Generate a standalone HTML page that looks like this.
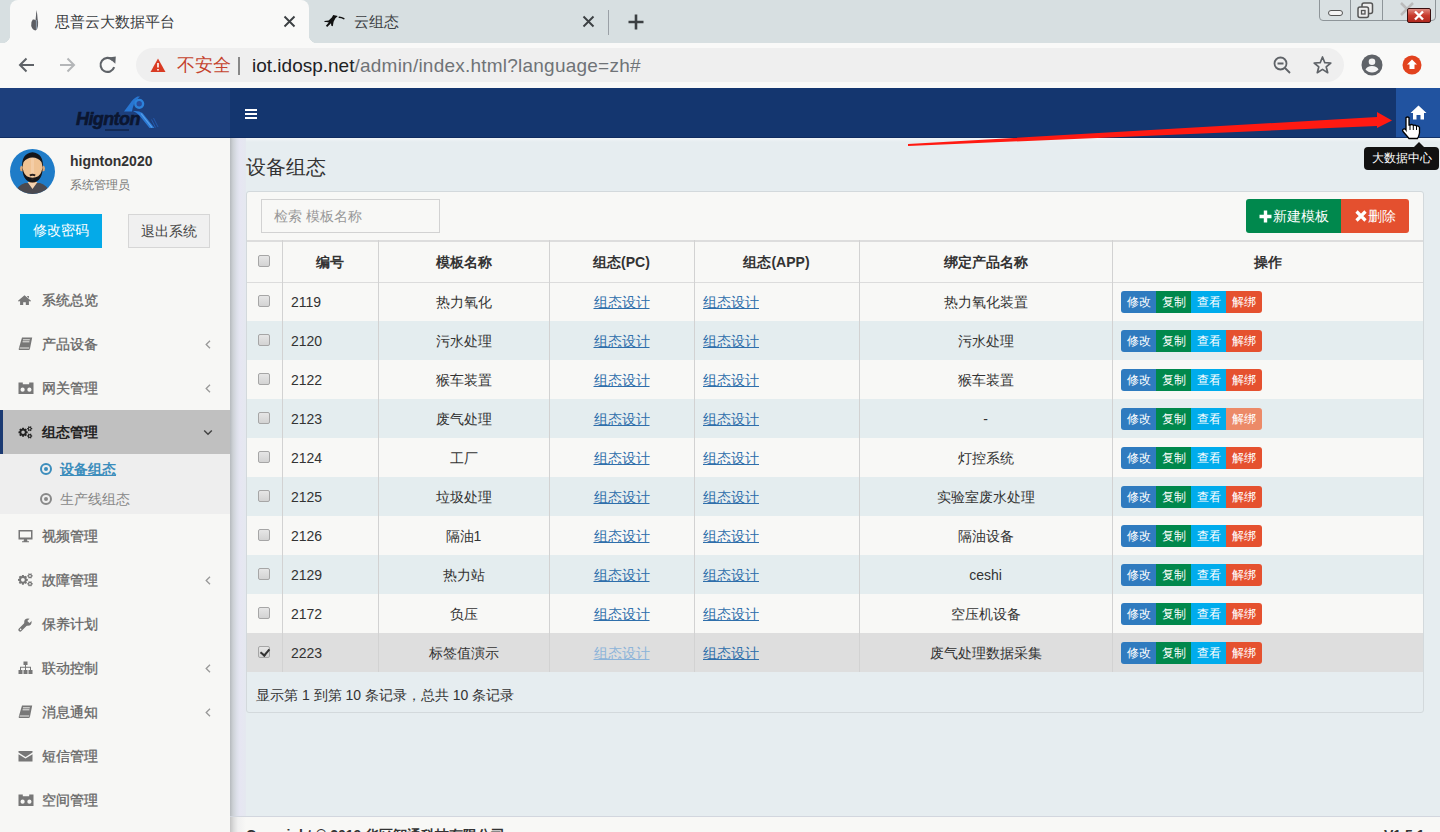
<!DOCTYPE html>
<html><head><meta charset="utf-8">
<style>
*{box-sizing:border-box;margin:0;padding:0}
html,body{width:1440px;height:832px;overflow:hidden;background:#e6edf0;font-family:"Liberation Sans",sans-serif;font-size:14px;color:#333}
.abs{position:absolute}
#tabstrip{left:0;top:0;width:1440px;height:43px;background:#d7dfe1}
#tab1{left:10px;top:0;width:299px;height:43px;background:#f9f9f8;border-radius:8px 8px 0 0}
#tab1:before,#tab1:after{content:"";position:absolute;bottom:0;width:8px;height:8px}
#tab1:before{left:-8px;background:radial-gradient(circle at 0 0,#d7dfe1 8px,#f9f9f8 8.5px)}
#tab1:after{right:-8px;background:radial-gradient(circle at 100% 0,#d7dfe1 8px,#f9f9f8 8.5px)}
#toolbar{left:0;top:43px;width:1440px;height:45px;background:#f9f9f8}
#omni{left:136px;top:48px;width:1208px;height:34px;background:#efefef;border-radius:17px}
.tabtitle{font-size:15px;line-height:18px;color:#3c4043;white-space:nowrap}
#logo{left:0;top:88px;width:230px;height:50px;background:#1d3f7c}
#navbar{left:230px;top:88px;width:1210px;height:50px;background:#14366f}
#homebtn{left:1396px;top:88px;width:44px;height:50px;background:#2153a0}
#sidebar{left:0;top:138px;width:230px;height:694px;background:#f7f7f5}
#shadow{left:230px;top:138px;width:16px;height:678px;background:linear-gradient(to right,#b6babe,#cdd1d6 3px,#dde0ea 7px,#e6e6f2 10px,#e5e8f0 15px)}
#shadow2{left:230px;top:817px;width:16px;height:15px;background:linear-gradient(to right,#c4c4c4,#dedede 4px,#f0f0f0 8px,#f8f8f6 16px)}
.menu{position:absolute;left:0;width:230px;height:44px;color:#666;font-size:14px}
.menu .tx{-webkit-text-stroke:0.3px currentColor}
.menu .ic{position:absolute;left:18px;top:15px;width:15px;height:14px;fill:#777}
.menu .tx{position:absolute;left:42px;top:13px;line-height:18px;white-space:nowrap}
.menu .chev{position:absolute;left:204px;top:18px;width:8px;height:9px}
.sub{position:absolute;left:0;width:230px;height:30px;font-size:14px;color:#888}
.sub .tx{position:absolute;left:60px;top:6px;line-height:18px;white-space:nowrap}
.sub .ci{position:absolute;left:40px;top:9px;width:12px;height:12px;border:2px solid #888;border-radius:50%}
.sub .ci:after{content:"";position:absolute;left:2px;top:2px;width:4px;height:4px;border-radius:50%;background:currentColor}
#panel{left:246px;top:191px;width:1178px;height:522px;background:#e6edf0;border:1px solid #d3d9dc;border-radius:3px}
#panelTop{left:247px;top:192px;width:1176px;height:48px;background:#f8f8f6;border-radius:3px 3px 0 0}
#search{left:261px;top:199px;width:179px;height:34px;border:1px solid #d2d2d2;background:#f8f8f6;color:#999;font-size:14px;line-height:32px;padding-left:12px}
.bigbtn{position:absolute;top:199px;height:34px;color:#fff;font-size:14px;line-height:34px;white-space:nowrap}
.row{position:absolute;left:247px;width:1176px;height:39px}
.row>div{position:absolute;top:1px;height:39px;line-height:39px;white-space:nowrap}
.hdr{position:absolute;left:247px;top:240px;width:1176px;height:43px;background:#f8f8f6;border-top:2px solid #ddd;border-bottom:1px solid #ddd}
.hdr>div{position:absolute;top:0;height:40px;line-height:40px;font-weight:bold;text-align:center;white-space:nowrap}
.vl{position:absolute;top:240px;width:1px;height:432px;background:#d2d2d2}
.cb{left:11px;width:12px;height:12px!important;top:13px!important;border:1px solid #a6a6a6;border-radius:2px;background:linear-gradient(#e6e6e6,#d3d3d3)}
.c-no{left:44px}
.c-name{left:131px;width:171px;text-align:center}
.c-pc{left:302px;width:145px;text-align:center}
.c-app{left:456px}
.c-prod{left:612px;width:253px;text-align:center}
.acts{left:874px;top:9px!important;height:22px!important;line-height:22px!important;font-size:12px}
.acts span{float:left;width:35px;height:22px;color:#fff;text-align:center}
.b1{background:#2f7bbf;border-radius:3px 0 0 3px}
.b2{background:#00884c}
.b3{background:#00acec}
.b4{background:#e5512f;border-radius:0 3px 3px 0;width:36px!important}
.b4.lt{background:#ec8a68}
.cb.chk{background:linear-gradient(#e6e6e6,#d3d3d3)}
.cb.chk:after{content:"";position:absolute;left:3px;top:0px;width:4px;height:7px;border:solid #333;border-width:0 2.5px 2.5px 0;transform:rotate(40deg)}
.cb{position:absolute}
a{color:#2f6fab;text-decoration:underline}
a.lt{color:#8db4d9}
#foot{left:230px;top:816px;width:1210px;height:16px;background:#f8f8f6;border-top:1px solid #d2d6de}
</style></head><body>
<div id="tabstrip" class="abs"></div>
<div id="tab1" class="abs"></div>
<div id="toolbar" class="abs"></div>
<div id="omni" class="abs"></div>
<div class="abs tabtitle" style="left:55px;top:13px">思普云大数据平台</div>
<div class="abs tabtitle" style="left:354px;top:13px">云组态</div>
<div class="abs" style="left:177px;top:54.5px;font-size:17.5px;line-height:20px;color:#c5432e;white-space:nowrap">不安全</div>
<div class="abs" style="left:238px;top:57px;width:2px;height:18px;background:#888"></div>
<div class="abs" style="left:252px;top:55px;font-size:19px;line-height:22px;color:#202124;white-space:nowrap">iot.idosp.net<span style="color:#6f7377;letter-spacing:0.23px">/admin/index.html?language=zh#</span></div>

<div id="logo" class="abs"></div>
<div id="navbar" class="abs"></div>
<div id="homebtn" class="abs"></div>
<div class="abs" style="left:0;top:137px;width:1440px;height:1px;background:#0f2b5c;opacity:0.8"></div>
<div class="abs" style="left:0;top:138px;width:1440px;height:4px;background:linear-gradient(rgba(255,255,255,0.5),rgba(255,255,255,0))"></div>

<div id="sidebar" class="abs"></div>
<div id="shadow" class="abs"></div>

<div class="abs" style="left:70px;top:152px;font-weight:bold;font-size:14px;line-height:18px;color:#333">hignton2020</div>
<div class="abs" style="left:70px;top:177px;font-size:12px;line-height:16px;color:#777">系统管理员</div>
<div class="abs" style="left:20px;top:214px;width:82px;height:34px;background:#04aae8;color:#fff;text-align:center;line-height:33px">修改密码</div>
<div class="abs" style="left:128px;top:214px;width:82px;height:34px;background:#f0f0f0;border:1px solid #d6d6d6;color:#444;text-align:center;line-height:32px">退出系统</div>

<div class="menu" style="top:278px"><svg class="ic" viewBox="0 0 15 12" style="width:13px;height:10.5px;top:16.5px" preserveAspectRatio="none"><path d="M7.5 0.3 L15 6.6 L13.9 7.8 L12.6 6.7 L12.6 11.7 L9 11.7 L9 8.2 L6 8.2 L6 11.7 L2.4 11.7 L2.4 6.7 L1.1 7.8 L0 6.6 Z M10.6 1 L12.6 1 L12.6 3.6 L10.6 2 Z"/></svg><div class="tx">系统总览</div></div>
<div class="menu" style="top:322px"><svg class="ic" viewBox="0 0 15 14"><path d="M4 0.5 L14.2 0.5 L12 11.5 Q11.7 13 10.5 13 L1.2 13 Q0.4 12.7 0.8 11.5 Z"/><path d="M1.6 11 L11.2 11 M5 2.8 L11.8 2.8 M4.6 4.8 L11.4 4.8" stroke="#f7f7f5" stroke-width="0.9"/></svg><div class="tx">产品设备</div><svg class="chev" viewBox="0 0 8 9"><path d="M6 0.8 L2.2 4.5 L6 8.2" stroke="#999" stroke-width="1.3" fill="none"/></svg></div>
<div class="menu" style="top:366px"><svg class="ic" viewBox="0 0 16 13" style="width:16px;height:13px;top:16px"><path fill-rule="evenodd" d="M0.5 0.5 L4.8 0.5 L4.8 2.3 L11.2 2.3 L11.2 0.5 L15.5 0.5 L15.5 12 L0.5 12 Z M4.6 5.6 A2.1 2.1 0 1 0 4.6 9.8 A2.1 2.1 0 1 0 4.6 5.6 Z M11.4 5.6 A2.1 2.1 0 1 0 11.4 9.8 A2.1 2.1 0 1 0 11.4 5.6 Z"/></svg><div class="tx">网关管理</div><svg class="chev" viewBox="0 0 8 9"><path d="M6 0.8 L2.2 4.5 L6 8.2" stroke="#999" stroke-width="1.3" fill="none"/></svg></div>
<div class="menu" style="top:410px;background:#c0c0c0;color:#222;font-weight:bold"><div style="position:absolute;left:0;top:0;width:3px;height:44px;background:#1b3a72"></div><svg class="ic" style="fill:#222" viewBox="0 0 15 15" style="height:15px;top:14px"><path fill-rule="evenodd" d="M8.63 6.67 L9.82 6.89 L9.82 8.71 L8.63 8.93 L8.34 9.64 L9.02 10.63 L7.73 11.92 L6.74 11.24 L6.03 11.53 L5.81 12.72 L3.99 12.72 L3.77 11.53 L3.06 11.24 L2.07 11.92 L0.78 10.63 L1.46 9.64 L1.17 8.93 L-0.02 8.71 L-0.02 6.89 L1.17 6.67 L1.46 5.96 L0.78 4.97 L2.07 3.68 L3.06 4.36 L3.77 4.07 L3.99 2.88 L5.81 2.88 L6.03 4.07 L6.74 4.36 L7.73 3.68 L9.02 4.97 L8.34 5.96 Z M6.80 7.80 A1.9 1.9 0 1 0 3.00 7.80 A1.9 1.9 0 1 0 6.80 7.80 Z M13.87 3.18 L14.73 3.28 L14.73 4.52 L13.87 4.62 L13.55 5.16 L13.90 5.96 L12.83 6.57 L12.31 5.88 L11.69 5.88 L11.17 6.57 L10.10 5.96 L10.45 5.16 L10.13 4.62 L9.27 4.52 L9.27 3.28 L10.13 3.18 L10.45 2.64 L10.10 1.84 L11.17 1.23 L11.69 1.92 L12.31 1.92 L12.83 1.23 L13.90 1.84 L13.55 2.64 Z M12.90 3.90 A0.9 0.9 0 1 0 11.10 3.90 A0.9 0.9 0 1 0 12.90 3.90 Z M13.87 11.08 L14.73 11.18 L14.73 12.42 L13.87 12.52 L13.55 13.06 L13.90 13.86 L12.83 14.47 L12.31 13.78 L11.69 13.78 L11.17 14.47 L10.10 13.86 L10.45 13.06 L10.13 12.52 L9.27 12.42 L9.27 11.18 L10.13 11.08 L10.45 10.54 L10.10 9.74 L11.17 9.13 L11.69 9.82 L12.31 9.82 L12.83 9.13 L13.90 9.74 L13.55 10.54 Z M12.90 11.80 A0.9 0.9 0 1 0 11.10 11.80 A0.9 0.9 0 1 0 12.90 11.80 Z"/></svg><div class="tx" style="-webkit-text-stroke:0">组态管理</div><svg class="chev" viewBox="0 0 10 9" style="width:10px;left:203px"><path d="M1.2 2.5 L5 6.3 L8.8 2.5" stroke="#444" stroke-width="1.5" fill="none"/></svg></div>
<div class="abs" style="left:0;top:454px;width:230px;height:60px;background:#eeeeee"></div>
<div class="sub" style="top:454px;color:#3c8dbc"><div class="ci" style="border-color:#3c8dbc"></div><div class="tx" style="text-decoration:underline;font-weight:bold">设备组态</div></div>
<div class="sub" style="top:484px"><div class="ci"></div><div class="tx">生产线组态</div></div>
<div class="menu" style="top:514px"><svg class="ic" viewBox="0 0 15 14"><path fill-rule="evenodd" d="M0.5 1 L14.5 1 L14.5 10.5 L9 10.5 L9.5 12.2 L11 12.2 L11 13.2 L4 13.2 L4 12.2 L5.5 12.2 L6 10.5 L0.5 10.5 Z M2 2.5 L13 2.5 L13 8.6 L2 8.6 Z"/></svg><div class="tx">视频管理</div></div>
<div class="menu" style="top:558px"><svg class="ic" viewBox="0 0 15 15" style="height:15px;top:14px"><path fill-rule="evenodd" d="M8.63 6.67 L9.82 6.89 L9.82 8.71 L8.63 8.93 L8.34 9.64 L9.02 10.63 L7.73 11.92 L6.74 11.24 L6.03 11.53 L5.81 12.72 L3.99 12.72 L3.77 11.53 L3.06 11.24 L2.07 11.92 L0.78 10.63 L1.46 9.64 L1.17 8.93 L-0.02 8.71 L-0.02 6.89 L1.17 6.67 L1.46 5.96 L0.78 4.97 L2.07 3.68 L3.06 4.36 L3.77 4.07 L3.99 2.88 L5.81 2.88 L6.03 4.07 L6.74 4.36 L7.73 3.68 L9.02 4.97 L8.34 5.96 Z M6.80 7.80 A1.9 1.9 0 1 0 3.00 7.80 A1.9 1.9 0 1 0 6.80 7.80 Z M13.87 3.18 L14.73 3.28 L14.73 4.52 L13.87 4.62 L13.55 5.16 L13.90 5.96 L12.83 6.57 L12.31 5.88 L11.69 5.88 L11.17 6.57 L10.10 5.96 L10.45 5.16 L10.13 4.62 L9.27 4.52 L9.27 3.28 L10.13 3.18 L10.45 2.64 L10.10 1.84 L11.17 1.23 L11.69 1.92 L12.31 1.92 L12.83 1.23 L13.90 1.84 L13.55 2.64 Z M12.90 3.90 A0.9 0.9 0 1 0 11.10 3.90 A0.9 0.9 0 1 0 12.90 3.90 Z M13.87 11.08 L14.73 11.18 L14.73 12.42 L13.87 12.52 L13.55 13.06 L13.90 13.86 L12.83 14.47 L12.31 13.78 L11.69 13.78 L11.17 14.47 L10.10 13.86 L10.45 13.06 L10.13 12.52 L9.27 12.42 L9.27 11.18 L10.13 11.08 L10.45 10.54 L10.10 9.74 L11.17 9.13 L11.69 9.82 L12.31 9.82 L12.83 9.13 L13.90 9.74 L13.55 10.54 Z M12.90 11.80 A0.9 0.9 0 1 0 11.10 11.80 A0.9 0.9 0 1 0 12.90 11.80 Z"/></svg><div class="tx">故障管理</div><svg class="chev" viewBox="0 0 8 9"><path d="M6 0.8 L2.2 4.5 L6 8.2" stroke="#999" stroke-width="1.3" fill="none"/></svg></div>
<div class="menu" style="top:602px"><svg class="ic" viewBox="0 0 14 14" style="width:14px;height:14px;top:15.5px"><path d="M2.2 11.8 L8.2 5.8" stroke="#777" stroke-width="3.6" stroke-linecap="round"/><circle cx="9.9" cy="4.1" r="3.7" fill="#777"/><path d="M9.3 2.9 L12.3 -0.1 L14.5 2.1 L11.5 5.1 Z" fill="#f7f7f5"/><circle cx="2.6" cy="11.4" r="0.8" fill="#f7f7f5"/></svg><div class="tx">保养计划</div></div>
<div class="menu" style="top:646px"><svg class="ic" viewBox="0 0 15 14"><path d="M5.5 0.5 L9.5 0.5 L9.5 4 L8 4 L8 5.8 L13 5.8 L13 9 L14.5 9 L14.5 13 L10.5 13 L10.5 9 L12 9 L12 6.8 L8 6.8 L8 9 L9.5 9 L9.5 13 L5.5 13 L5.5 9 L7 9 L7 6.8 L3 6.8 L3 9 L4.5 9 L4.5 13 L0.5 13 L0.5 9 L2 9 L2 5.8 L7 5.8 L7 4 L5.5 4 Z"/></svg><div class="tx">联动控制</div><svg class="chev" viewBox="0 0 8 9"><path d="M6 0.8 L2.2 4.5 L6 8.2" stroke="#999" stroke-width="1.3" fill="none"/></svg></div>
<div class="menu" style="top:690px"><svg class="ic" viewBox="0 0 15 14"><path d="M4 0.5 L14.2 0.5 L12 11.5 Q11.7 13 10.5 13 L1.2 13 Q0.4 12.7 0.8 11.5 Z"/><path d="M1.6 11 L11.2 11 M5 2.8 L11.8 2.8 M4.6 4.8 L11.4 4.8" stroke="#f7f7f5" stroke-width="0.9"/></svg><div class="tx">消息通知</div><svg class="chev" viewBox="0 0 8 9"><path d="M6 0.8 L2.2 4.5 L6 8.2" stroke="#999" stroke-width="1.3" fill="none"/></svg></div>
<div class="menu" style="top:734px"><svg class="ic" viewBox="0 0 15 14"><path d="M0.5 2 L14.5 2 L14.5 3.6 L7.5 8 L0.5 3.6 Z M0.5 5.2 L7.5 9.6 L14.5 5.2 L14.5 12.5 L0.5 12.5 Z"/></svg><div class="tx">短信管理</div></div>
<div class="menu" style="top:778px"><svg class="ic" viewBox="0 0 16 13" style="width:16px;height:13px;top:16px"><path fill-rule="evenodd" d="M0.5 0.5 L4.8 0.5 L4.8 2.3 L11.2 2.3 L11.2 0.5 L15.5 0.5 L15.5 12 L0.5 12 Z M4.6 5.6 A2.1 2.1 0 1 0 4.6 9.8 A2.1 2.1 0 1 0 4.6 5.6 Z M11.4 5.6 A2.1 2.1 0 1 0 11.4 9.8 A2.1 2.1 0 1 0 11.4 5.6 Z"/></svg><div class="tx">空间管理</div></div>

<div class="abs" style="left:246px;top:155px;font-size:20px;line-height:24px;color:#333">设备组态</div>
<div id="panel" class="abs"></div>
<div id="panelTop" class="abs"></div>
<div id="search" class="abs">检索 模板名称</div>
<div class="bigbtn" style="left:1246px;width:95px;background:#00884d;border-radius:3px 0 0 3px"><svg style="position:absolute;left:13px;top:11px" width="13" height="13" viewBox="0 0 13 13"><path d="M6.5 0.5 L6.5 12.5 M0.5 6.5 L12.5 6.5" stroke="#fff" stroke-width="3.4"/></svg><span style="position:absolute;left:27px;top:0">新建模板</span></div>
<div class="bigbtn" style="left:1341px;width:68px;background:#e4502f;border-radius:0 3px 3px 0"><svg style="position:absolute;left:14px;top:11px" width="12" height="12" viewBox="0 0 12 12"><path d="M1.5 1.5 L10.5 10.5 M10.5 1.5 L1.5 10.5" stroke="#fff" stroke-width="3.2"/></svg><span style="position:absolute;left:27px;top:0">删除</span></div>

<div class="hdr">
<div class="cb" style="top:13px!important"></div>
<div style="left:35px;width:96px">编号</div>
<div style="left:131px;width:171px">模板名称</div>
<div style="left:302px;width:145px">组态(PC)</div>
<div style="left:447px;width:165px">组态(APP)</div>
<div style="left:612px;width:253px">绑定产品名称</div>
<div style="left:865px;width:311px">操作</div>
</div>
<div class="row" style="top:282px;background:#f8f8f6">
<div class="cb"></div>
<div class="c-no">2119</div>
<div class="c-name">热力氧化</div>
<div class="c-pc"><a>组态设计</a></div>
<div class="c-app"><a>组态设计</a></div>
<div class="c-prod">热力氧化装置</div>
<div class="acts"><span class="b1">修改</span><span class="b2">复制</span><span class="b3">查看</span><span class="b4">解绑</span></div>
</div>
<div class="row" style="top:321px;background:#e4edef">
<div class="cb"></div>
<div class="c-no">2120</div>
<div class="c-name">污水处理</div>
<div class="c-pc"><a>组态设计</a></div>
<div class="c-app"><a>组态设计</a></div>
<div class="c-prod">污水处理</div>
<div class="acts"><span class="b1">修改</span><span class="b2">复制</span><span class="b3">查看</span><span class="b4">解绑</span></div>
</div>
<div class="row" style="top:360px;background:#f8f8f6">
<div class="cb"></div>
<div class="c-no">2122</div>
<div class="c-name">猴车装置</div>
<div class="c-pc"><a>组态设计</a></div>
<div class="c-app"><a>组态设计</a></div>
<div class="c-prod">猴车装置</div>
<div class="acts"><span class="b1">修改</span><span class="b2">复制</span><span class="b3">查看</span><span class="b4">解绑</span></div>
</div>
<div class="row" style="top:399px;background:#e4edef">
<div class="cb"></div>
<div class="c-no">2123</div>
<div class="c-name">废气处理</div>
<div class="c-pc"><a>组态设计</a></div>
<div class="c-app"><a>组态设计</a></div>
<div class="c-prod">-</div>
<div class="acts"><span class="b1">修改</span><span class="b2">复制</span><span class="b3">查看</span><span class="b4 lt">解绑</span></div>
</div>
<div class="row" style="top:438px;background:#f8f8f6">
<div class="cb"></div>
<div class="c-no">2124</div>
<div class="c-name">工厂</div>
<div class="c-pc"><a>组态设计</a></div>
<div class="c-app"><a>组态设计</a></div>
<div class="c-prod">灯控系统</div>
<div class="acts"><span class="b1">修改</span><span class="b2">复制</span><span class="b3">查看</span><span class="b4">解绑</span></div>
</div>
<div class="row" style="top:477px;background:#e4edef">
<div class="cb"></div>
<div class="c-no">2125</div>
<div class="c-name">垃圾处理</div>
<div class="c-pc"><a>组态设计</a></div>
<div class="c-app"><a>组态设计</a></div>
<div class="c-prod">实验室废水处理</div>
<div class="acts"><span class="b1">修改</span><span class="b2">复制</span><span class="b3">查看</span><span class="b4">解绑</span></div>
</div>
<div class="row" style="top:516px;background:#f8f8f6">
<div class="cb"></div>
<div class="c-no">2126</div>
<div class="c-name">隔油1</div>
<div class="c-pc"><a>组态设计</a></div>
<div class="c-app"><a>组态设计</a></div>
<div class="c-prod">隔油设备</div>
<div class="acts"><span class="b1">修改</span><span class="b2">复制</span><span class="b3">查看</span><span class="b4">解绑</span></div>
</div>
<div class="row" style="top:555px;background:#e4edef">
<div class="cb"></div>
<div class="c-no">2129</div>
<div class="c-name">热力站</div>
<div class="c-pc"><a>组态设计</a></div>
<div class="c-app"><a>组态设计</a></div>
<div class="c-prod">ceshi</div>
<div class="acts"><span class="b1">修改</span><span class="b2">复制</span><span class="b3">查看</span><span class="b4">解绑</span></div>
</div>
<div class="row" style="top:594px;background:#f8f8f6">
<div class="cb"></div>
<div class="c-no">2172</div>
<div class="c-name">负压</div>
<div class="c-pc"><a>组态设计</a></div>
<div class="c-app"><a>组态设计</a></div>
<div class="c-prod">空压机设备</div>
<div class="acts"><span class="b1">修改</span><span class="b2">复制</span><span class="b3">查看</span><span class="b4">解绑</span></div>
</div>
<div class="row" style="top:633px;background:#dedede">
<div class="cb chk"></div>
<div class="c-no">2223</div>
<div class="c-name">标签值演示</div>
<div class="c-pc"><a class=lt>组态设计</a></div>
<div class="c-app"><a>组态设计</a></div>
<div class="c-prod">废气处理数据采集</div>
<div class="acts"><span class="b1">修改</span><span class="b2">复制</span><span class="b3">查看</span><span class="b4">解绑</span></div>
</div>

<div class="abs" style="left:247px;top:282px;width:1176px;height:1px;background:#dcdcdc"></div>
<div class="vl" style="left:282px"></div>
<div class="vl" style="left:378px"></div>
<div class="vl" style="left:549px"></div>
<div class="vl" style="left:694px"></div>
<div class="vl" style="left:859px"></div>
<div class="vl" style="left:1112px"></div>
<div class="abs" style="left:256px;top:686px;font-size:14px;line-height:18px;color:#333;white-space:nowrap">显示第 1 到第 10 条记录，总共 10 条记录</div>


<!-- tab icons -->
<svg class="abs" style="left:28px;top:8px" width="14" height="26" viewBox="28 8 14 26"><path d="M36.3 10 Q37.5 14 37.6 19 Q38.5 22 38 26 Q37.5 29.5 35.5 30.5 Q32.5 30 31.2 26 Q30.8 21.5 32.8 19.5 Q35 19 35.5 20.5 Q36.2 15 36.3 10 Z" fill="#4a4d52" opacity="0.9"/><path d="M36.5 20 L36.5 29" stroke="#8a98a6" stroke-width="1.2"/></svg>
<svg class="abs" style="left:283px;top:15px" width="13" height="13" viewBox="0 0 13 13"><path d="M1.5 1.5 L11.5 11.5 M11.5 1.5 L1.5 11.5" stroke="#3c4043" stroke-width="1.9"/></svg>
<svg class="abs" style="left:320px;top:10px" width="28" height="22" viewBox="320 10 28 22"><path d="M333.2 15 L337.8 16 L335.4 18.3 L333.6 21.8 L332.8 26.2 L331.3 25.8 L331 23.2 L327.2 27 L325.9 25.8 L328.8 22.6 L326.5 21.9 L324.6 22 L324.4 20.9 L328.6 20.6 L331.8 17.6 Z" fill="#111"/><path d="M339.3 17.2 Q341.5 17.3 343.8 18.6" stroke="#111" stroke-width="1.6" fill="none" stroke-linecap="round"/></svg>
<svg class="abs" style="left:582px;top:15px" width="13" height="13" viewBox="0 0 13 13"><path d="M1.5 1.5 L11.5 11.5 M11.5 1.5 L1.5 11.5" stroke="#3c4043" stroke-width="1.9"/></svg>
<div class="abs" style="left:608px;top:10px;width:1px;height:25px;background:#9aa0a6"></div>
<svg class="abs" style="left:627px;top:13px" width="18" height="18" viewBox="0 0 18 18"><path d="M9 1.5 L9 16.5 M1.5 9 L16.5 9" stroke="#3c4043" stroke-width="2.6"/></svg>
<!-- window controls -->
<div class="abs" style="left:1319px;top:-4px;width:117px;height:25px;border:1px solid #8e9599;border-radius:4px;background:#d9e0e2"></div>
<div class="abs" style="left:1350px;top:0;width:1px;height:21px;background:#8e9599"></div>
<div class="abs" style="left:1382px;top:0;width:1px;height:21px;background:#8e9599"></div>
<div class="abs" style="left:1328px;top:10px;width:15px;height:6px;border:1.5px solid #555;border-radius:3px;background:#f4f4f4"></div>
<svg class="abs" style="left:1357px;top:2px" width="17" height="17" viewBox="0 0 17 17"><rect x="5" y="1" width="10.5" height="10.5" rx="2" fill="#eee" stroke="#555" stroke-width="1.5"/><rect x="1" y="5" width="10.5" height="10.5" rx="2" fill="#eee" stroke="#555" stroke-width="1.5"/><rect x="4.5" y="8.5" width="3.5" height="3.5" fill="none" stroke="#555" stroke-width="1.3"/></svg>
<svg class="abs" style="left:1399px;top:1px" width="16" height="16" viewBox="0 0 16 16"><path d="M2 2 L14 14 M14 2 L2 14" stroke="#bbb" stroke-width="2.5"/></svg>
<div class="abs" style="left:1407px;top:8px;width:24px;height:15px;border:1px solid #3a1010;border-radius:2px;background:linear-gradient(#e08a80,#c83a2c 50%,#b02a20)"></div>
<svg class="abs" style="left:1413px;top:10px" width="12" height="11" viewBox="0 0 12 11"><path d="M2 1.5 L10 9.5 M10 1.5 L2 9.5" stroke="#fff" stroke-width="2.4"/></svg>
<!-- toolbar icons -->
<svg class="abs" style="left:17px;top:55px" width="20" height="20" viewBox="0 0 20 20"><path d="M17 10 L3.5 10 M9.5 3.5 L3 10 L9.5 16.5" stroke="#5f6368" stroke-width="2" fill="none"/></svg>
<svg class="abs" style="left:57px;top:55px" width="20" height="20" viewBox="0 0 20 20"><path d="M3 10 L16.5 10 M10.5 3.5 L17 10 L10.5 16.5" stroke="#b4b6b8" stroke-width="2" fill="none"/></svg>
<svg class="abs" style="left:97px;top:54px" width="22" height="22" viewBox="0 0 22 22"><path d="M17.2 13.2 A7 7 0 1 1 15.6 6" stroke="#5f6368" stroke-width="2.1" fill="none"/><path d="M11.5 3.5 L18.8 2.5 L18.3 9.8 Z" fill="#5f6368"/></svg>
<svg class="abs" style="left:150px;top:58px" width="16" height="15" viewBox="0 0 16 15"><path d="M8 0.5 L15.5 14 L0.5 14 Z" fill="#d93b23"/><path d="M8 5 L8 9.5 M8 11 L8 12.5" stroke="#fff" stroke-width="1.6"/></svg>
<svg class="abs" style="left:1272px;top:55px" width="20" height="20" viewBox="0 0 20 20"><circle cx="8.5" cy="8.5" r="6" stroke="#5f6368" stroke-width="1.8" fill="none"/><path d="M13 13 L18 18 M5.5 8.5 L11.5 8.5" stroke="#5f6368" stroke-width="1.8"/></svg>
<svg class="abs" style="left:1312px;top:55px" width="21" height="20" viewBox="0 0 21 20"><path d="M10.5 2 L12.8 7.7 L18.8 8 L14.2 11.8 L15.7 17.7 L10.5 14.4 L5.3 17.7 L6.8 11.8 L2.2 8 L8.2 7.7 Z" stroke="#5f6368" stroke-width="1.7" fill="none" stroke-linejoin="round"/></svg>
<svg class="abs" style="left:1361px;top:54px" width="22" height="22" viewBox="0 0 22 22"><circle cx="11" cy="11" r="10.5" fill="#5f6368"/><circle cx="11" cy="7.8" r="3.3" fill="#f4f4f4"/><path d="M4.5 15.5 Q6 12 11 12 Q16 12 17.5 15.5 Q15 18.5 11 18.5 Q7 18.5 4.5 15.5 Z" fill="#f4f4f4"/></svg>
<svg class="abs" style="left:1402px;top:55px" width="20" height="20" viewBox="0 0 20 20"><circle cx="10" cy="10" r="9.5" fill="#e2421e"/><path d="M10 4.5 L15 9.5 L12.5 9.5 L12.5 14 L7.5 14 L7.5 9.5 L5 9.5 Z" fill="#fff"/></svg>
<!-- logo -->
<div class="abs" style="left:76px;top:109px;font-weight:bold;font-style:italic;font-size:18px;line-height:20px;color:#0b1631;letter-spacing:-0.6px;-webkit-text-stroke:0.6px #0b1631">Hignton</div>
<svg class="abs" style="left:120px;top:94px" width="40" height="36" viewBox="120 94 40 36"><path d="M124 111.5 Q127 107.5 130 103.5 Q133 98.5 137.5 96.5 L140 96.5 Q135.5 100 134 104 Q132.5 108 132 111.5 Z" fill="#2876d2"/><circle cx="139.2" cy="103.8" r="3.9" stroke="#2c82da" stroke-width="2.4" fill="#294c9c"/><path d="M133 111 Q139 110.5 142.5 113 L154.5 128 L149.5 128 L139 115 Q136.5 112.5 133 111 Z" fill="#2c7ad4"/><path d="M141 113.5 L152 127.5" stroke="#5aa2ec" stroke-width="1.2"/><path d="M153.5 118 L158 127 M151.5 119.5 L155.5 127.5" stroke="#2560b8" stroke-width="0.8"/></svg>
<div class="abs" style="left:105px;top:129px;width:24px;height:2px;background:#132a55"></div>
<!-- hamburger -->
<div class="abs" style="left:245px;top:109px;width:12px;height:2px;background:#fff;box-shadow:0 4px 0 #fff,0 8px 0 #fff"></div>
<!-- home icon -->
<svg class="abs" style="left:1410px;top:105px" width="17" height="15" viewBox="0 0 17 15"><path d="M8.5 0.5 L16.5 8 L14 8 L14 14.5 L10.5 14.5 L10.5 10 L6.5 10 L6.5 14.5 L3 14.5 L3 8 L0.5 8 Z" fill="#fff"/></svg>
<!-- arrow -->
<svg class="abs" style="left:0;top:0" width="1440" height="160" viewBox="0 0 1440 160"><path d="M908 144 L908 146 L1377 126 L1377 128 L1392 120.5 L1377 112 L1377 117 Z" fill="#ff1a12"/></svg>
<!-- cursor -->
<svg class="abs" style="left:1401px;top:116px" width="20" height="24" viewBox="0 0 20 24"><path d="M5 1.5 Q6.5 0.5 8 1.5 L8 9 L9 9 Q10.5 8 12 9 L12.5 9.5 Q14 8.5 15.5 10 Q17.5 9.5 18.5 11.5 L18.5 17 Q18 20 16.5 22.5 L8 22.5 Q6 20 2 15.5 Q1 14 2.5 13 Q4 12.5 5 14 Z" fill="#fff" stroke="#000" stroke-width="1.3"/><path d="M9 9 L9 14 M12.3 9.5 L12.3 14 M15.5 10 L15.5 14" stroke="#000" stroke-width="1"/></svg>
<!-- tooltip -->
<svg class="abs" style="left:1412px;top:141px" width="14" height="7" viewBox="0 0 14 7"><path d="M1 7 L7 1 L13 7 Z" fill="#111"/></svg>
<div class="abs" style="left:1364px;top:147px;width:75px;height:23px;background:#111;border-radius:4px;color:#fff;font-size:12px;line-height:23px;padding-left:8px;white-space:nowrap">大数据中心</div>
<!-- avatar -->
<svg class="abs" style="left:10px;top:149px" width="45" height="45" viewBox="0 0 45 45"><defs><clipPath id="cc"><circle cx="22.5" cy="22.5" r="22.5"/></clipPath></defs><circle cx="22.5" cy="22.5" r="22.5" fill="#1f7cc8"/><g clip-path="url(#cc)"><path d="M5 46 Q7 36 15 34 L30 34 Q38 36 40 46 Z" fill="#4b4a50"/><path d="M17.5 33 L27.5 33 L22.5 40 Z" fill="#f3d2b0"/><path d="M19 28 L26 28 L26 34 L19 34 Z" fill="#e9b98f"/><ellipse cx="11.8" cy="19.5" rx="1.8" ry="2.8" fill="#d9a87c"/><ellipse cx="33.2" cy="19.5" rx="1.8" ry="2.8" fill="#d9a87c"/><ellipse cx="22.5" cy="18.5" rx="10.2" ry="12.8" fill="#f0c394"/><path d="M22.5 6 L22.5 31" stroke="#f7d8b8" stroke-width="3" opacity="0.5"/><path d="M12.2 19 Q11 4.5 22.5 3.2 Q34 4.5 32.8 19 L31.5 13 Q28 8.5 22.5 8.5 Q17 8.5 13.5 13 Z" fill="#15161a"/><path d="M12.3 18 Q12.5 33 22.5 33.5 Q32.5 33 32.7 18 L31.3 23 Q29.5 28.5 22.5 28.8 Q15.5 28.5 13.7 23 Z" fill="#15161a"/><path d="M19.5 25.5 Q22.5 24 25.5 25.5 L25 27.2 Q22.5 26.3 20 27.2 Z" fill="#2a2220"/><path d="M21 29 L24 29 L23.5 31 L21.5 31 Z" fill="#2a2220"/></g></svg>

<div id="foot" class="abs"></div>
<div id="shadow2" class="abs"></div>
<div class="abs" style="left:246px;top:826px;font-weight:bold;font-size:14px;line-height:18px;color:#333;white-space:nowrap">Copyright © 2019 华区智通科技有限公司</div>
<div class="abs" style="left:1384px;top:826px;font-weight:bold;font-size:14px;line-height:18px;color:#333;white-space:nowrap">V1.5.1</div>
</body></html>
